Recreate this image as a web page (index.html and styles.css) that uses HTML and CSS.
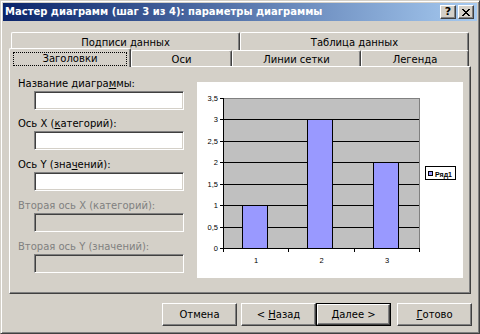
FILE: index.html
```html
<!DOCTYPE html>
<html lang="ru">
<head>
<meta charset="utf-8">
<title>Мастер диаграмм</title>
<link rel="stylesheet" href="styles.css">
</head>
<body>
<div class="window">
  <div class="titlebar">
    <span class="title">Мастер диаграмм (шаг 3 из 4): параметры диаграммы</span>
    <div class="tb-btn tb-help">?</div>
    <div class="tb-btn tb-close">
      <svg width="8" height="7" viewBox="0 0 8 7" shape-rendering="crispEdges">
        <path d="M0 0h2v1h-2zM6 0h2v1h-2zM1 1h2v1h-2zM5 1h2v1h-2zM2 2h4v1h-4zM3 3h2v1h-2zM2 4h4v1h-4zM1 5h2v1h-2zM5 5h2v1h-2zM0 6h2v1h-2zM6 6h2v1h-2z" fill="#000"/>
      </svg>
    </div>
  </div>

  <div class="tabs">
    <div class="tab-row back">
      <div class="tab tab-podp">Подписи данных</div>
      <div class="tab tab-tabl">Таблица данных</div>
    </div>
    <div class="tab-row front">
      <div class="tab active tab-zag"><span class="focus">Заголовки</span></div>
      <div class="tab tab-osi">Оси</div>
      <div class="tab tab-lin">Линии сетки</div>
      <div class="tab tab-leg">Легенда</div>
    </div>
  </div>

  <div class="panel">
    <div class="form">
      <div class="field">
        <div class="label">Название диагра<u>м</u>мы:</div>
        <div class="input"></div>
      </div>
      <div class="field">
        <div class="label">Ось X (<u>к</u>атегорий):</div>
        <div class="input"></div>
      </div>
      <div class="field">
        <div class="label">Ось Y (зна<u>ч</u>ений):</div>
        <div class="input"></div>
      </div>
      <div class="field disabled">
        <div class="label">Вторая ось X (категорий):</div>
        <div class="input"></div>
      </div>
      <div class="field disabled">
        <div class="label">Вторая ось Y (значений):</div>
        <div class="input"></div>
      </div>
    </div>
    <div class="preview">
      <svg class="chart" width="266" height="196" viewBox="0 0 266 196" shape-rendering="crispEdges">
        <rect x="26" y="16" width="196" height="150" fill="#C0C0C0"/>
        <rect x="26" y="16" width="197" height="1" fill="#808080"/>
        <rect x="222" y="16" width="1" height="150" fill="#808080"/>
        <g fill="#000">
          <rect x="26" y="37" width="196" height="1"/>
          <rect x="26" y="59" width="196" height="1"/>
          <rect x="26" y="80" width="196" height="1"/>
          <rect x="26" y="102" width="196" height="1"/>
          <rect x="26" y="123" width="196" height="1"/>
          <rect x="26" y="145" width="196" height="1"/>
        </g>
        <g>
          <rect x="45" y="123" width="26" height="44" fill="#000"/>
          <rect x="46" y="124" width="24" height="42" fill="#9999FF"/>
          <rect x="110" y="37" width="26" height="130" fill="#000"/>
          <rect x="111" y="38" width="24" height="128" fill="#9999FF"/>
          <rect x="176" y="80" width="26" height="87" fill="#000"/>
          <rect x="177" y="81" width="24" height="85" fill="#9999FF"/>
        </g>
        <g fill="#000">
          <rect x="26" y="16" width="1" height="151"/>
          <rect x="26" y="166" width="197" height="1"/>
          <rect x="23" y="16" width="3" height="1"/>
          <rect x="23" y="37" width="3" height="1"/>
          <rect x="23" y="59" width="3" height="1"/>
          <rect x="23" y="80" width="3" height="1"/>
          <rect x="23" y="102" width="3" height="1"/>
          <rect x="23" y="123" width="3" height="1"/>
          <rect x="23" y="145" width="3" height="1"/>
          <rect x="23" y="166" width="3" height="1"/>
          <rect x="26" y="167" width="1" height="3"/>
          <rect x="91" y="167" width="1" height="3"/>
          <rect x="157" y="167" width="1" height="3"/>
          <rect x="222" y="167" width="1" height="3"/>
        </g>
        <g class="axis-text" text-anchor="end">
          <text x="21" y="19">3,5</text>
          <text x="21" y="40">3</text>
          <text x="21" y="62">2,5</text>
          <text x="21" y="83">2</text>
          <text x="21" y="105">1,5</text>
          <text x="21" y="126">1</text>
          <text x="21" y="148">0,5</text>
          <text x="21" y="169">0</text>
        </g>
        <g class="axis-text" text-anchor="middle">
          <text x="59" y="180.5">1</text>
          <text x="124.5" y="180.5">2</text>
          <text x="190" y="180.5">3</text>
        </g>
        <rect x="228" y="84" width="31" height="14" fill="#000"/>
        <rect x="229" y="85" width="29" height="12" fill="#fff"/>
        <rect x="231" y="89" width="5" height="5" fill="#000"/>
        <rect x="232" y="90" width="3" height="3" fill="#9999FF"/>
        <text class="legend-text" x="238" y="94.5">Ряд1</text>
      </svg>
    </div>
  </div>

  <div class="buttons">
    <div class="btn btn-cancel"><span>Отмена</span></div>
    <div class="btn btn-back"><span>&lt; <u>Н</u>азад</span></div>
    <div class="btn btn-next default"><span class="btn-inner"><span><u>Д</u>алее &gt;</span></span></div>
    <div class="btn btn-finish"><span><u>Г</u>отово</span></div>
  </div>
</div>
</body>
</html>
```

FILE: styles.css
```css
* {
  box-sizing: border-box;
}

html,
body {
  margin: 0;
  padding: 0;
}

body {
  width: 480px;
  height: 334px;
  overflow: hidden;
  background: #D4D0C8;
  font-family: "DejaVu Sans", "Noto Sans", sans-serif;
  font-size: 10px;
  color: #000;
}

u {
  text-decoration: underline;
  text-underline-offset: 1px;
}

.window {
  width: 480px;
  height: 334px;
  border: 1px solid;
  border-color: #D4D0C8 #404040 #404040 #D4D0C8;
  box-shadow: inset 1px 1px #fff, inset -1px -1px #808080;
  padding: 2px;
  display: flex;
  flex-direction: column;
  background: #D4D0C8;
}

/* title bar */
.titlebar {
  height: 18px;
  flex: none;
  display: flex;
  align-items: center;
  padding: 0 3px 0 2px;
  background: linear-gradient(to right, #0A246A, #A6CAF0);
}

.title {
  flex: 1;
  color: #fff;
  font-weight: bold;
  font-size: 10px;
  white-space: nowrap;
  line-height: 18px;
}

.tb-btn {
  width: 16px;
  height: 14px;
  flex: none;
  background: #D4D0C8;
  border: 1px solid;
  border-color: #fff #404040 #404040 #fff;
  box-shadow: inset -1px -1px #808080;
  display: flex;
  align-items: center;
  justify-content: center;
}

.tb-help {
  font-weight: bold;
  font-size: 11px;
  line-height: 12px;
}

.tb-close {
  margin-left: 2px;
}

/* tabs */
.tabs {
  margin-top: 9px;
  padding-left: 6px;
  flex: none;
}

.tab-row {
  display: flex;
  height: 18px;
}

.back {
  margin-left: 2px;
}

.tab {
  background: #D4D0C8;
  border-left: 1px solid #fff;
  border-top: 1px solid #fff;
  border-right: 1px solid #404040;
  box-shadow: inset -1px 0 #808080;
  border-radius: 2px 2px 0 0;
  text-align: center;
  line-height: 13px;
  white-space: nowrap;
}

.back .tab {
  height: 20px;
  margin-top: 2px;
  padding-top: 3px;
}

.front .tab {
  height: 16px;
  margin-top: 2px;
  padding-top: 2px;
}

.front .tab.active {
  position: relative;
  z-index: 1;
  height: 19px;
  margin-top: 0;
  padding: 3px 3px 0 3px;
  box-shadow: inset -1px 0 #808080;
}

.focus {
  display: block;
  height: 14px;
  line-height: 14px;
  outline: 1px dotted #000;
  outline-offset: -1px;
}

.tab-podp { width: 229px; }
.tab-tabl { width: 229px; }
.tab-zag  { width: 122px; }
.tab-osi  { width: 101px; }
.tab-lin  { width: 129px; }
.tab-leg  { width: 108px; }

/* panel */
.panel {
  margin-left: 6px;
  width: 462px;
  height: 228px;
  flex: none;
  border: 1px solid;
  border-color: #fff #404040 #404040 #fff;
  box-shadow: inset -1px -1px #808080;
  padding: 10px 0 0 8px;
  display: flex;
}

.form {
  width: 179px;
  flex: none;
}

.field {
  margin-top: 8px;
}

.field:first-child {
  margin-top: 0;
}

.field:nth-child(2) {
  margin-top: 7px;
}

.label {
  height: 13px;
  line-height: 13px;
  white-space: nowrap;
  margin-bottom: 1px;
}

.input {
  margin-left: 16px;
  width: 150px;
  height: 19px;
  background: #fff;
  border: 1px solid;
  border-color: #808080 #fff #fff #808080;
  box-shadow: inset 1px 1px #404040, inset -1px -1px #D4D0C8;
}

.disabled .label {
  color: #808080;
}

.disabled .input {
  background: #D4D0C8;
}

.preview {
  margin-top: 5px;
  width: 266px;
  height: 196px;
  background: #fff;
}

.chart {
  display: block;
}

.axis-text {
  font-family: "Liberation Sans", Arial, sans-serif;
  font-size: 7.5px;
  fill: #000;
}

.legend-text {
  font-family: "Liberation Sans", Arial, sans-serif;
  font-size: 7px;
  font-weight: bold;
  fill: #000;
}

/* buttons */
.buttons {
  margin-top: 9px;
  display: flex;
  padding-left: 159px;
}

.btn {
  width: 75px;
  height: 23px;
  background: #D4D0C8;
  border: 1px solid;
  border-color: #fff #404040 #404040 #fff;
  box-shadow: inset -1px -1px #808080;
  display: flex;
  align-items: center;
  justify-content: center;
  line-height: 13px;
  white-space: nowrap;
}

.btn-back {
  margin-left: 4px;
}

.btn-finish {
  margin-left: 6px;
}

.btn.default {
  border: 1px solid #000;
  box-shadow: none;
  padding: 0;
}

.btn-inner {
  width: 100%;
  height: 100%;
  display: flex;
  align-items: center;
  justify-content: center;
  border: 1px solid;
  border-color: #fff #404040 #404040 #fff;
  box-shadow: inset -1px -1px #808080;
}
```
